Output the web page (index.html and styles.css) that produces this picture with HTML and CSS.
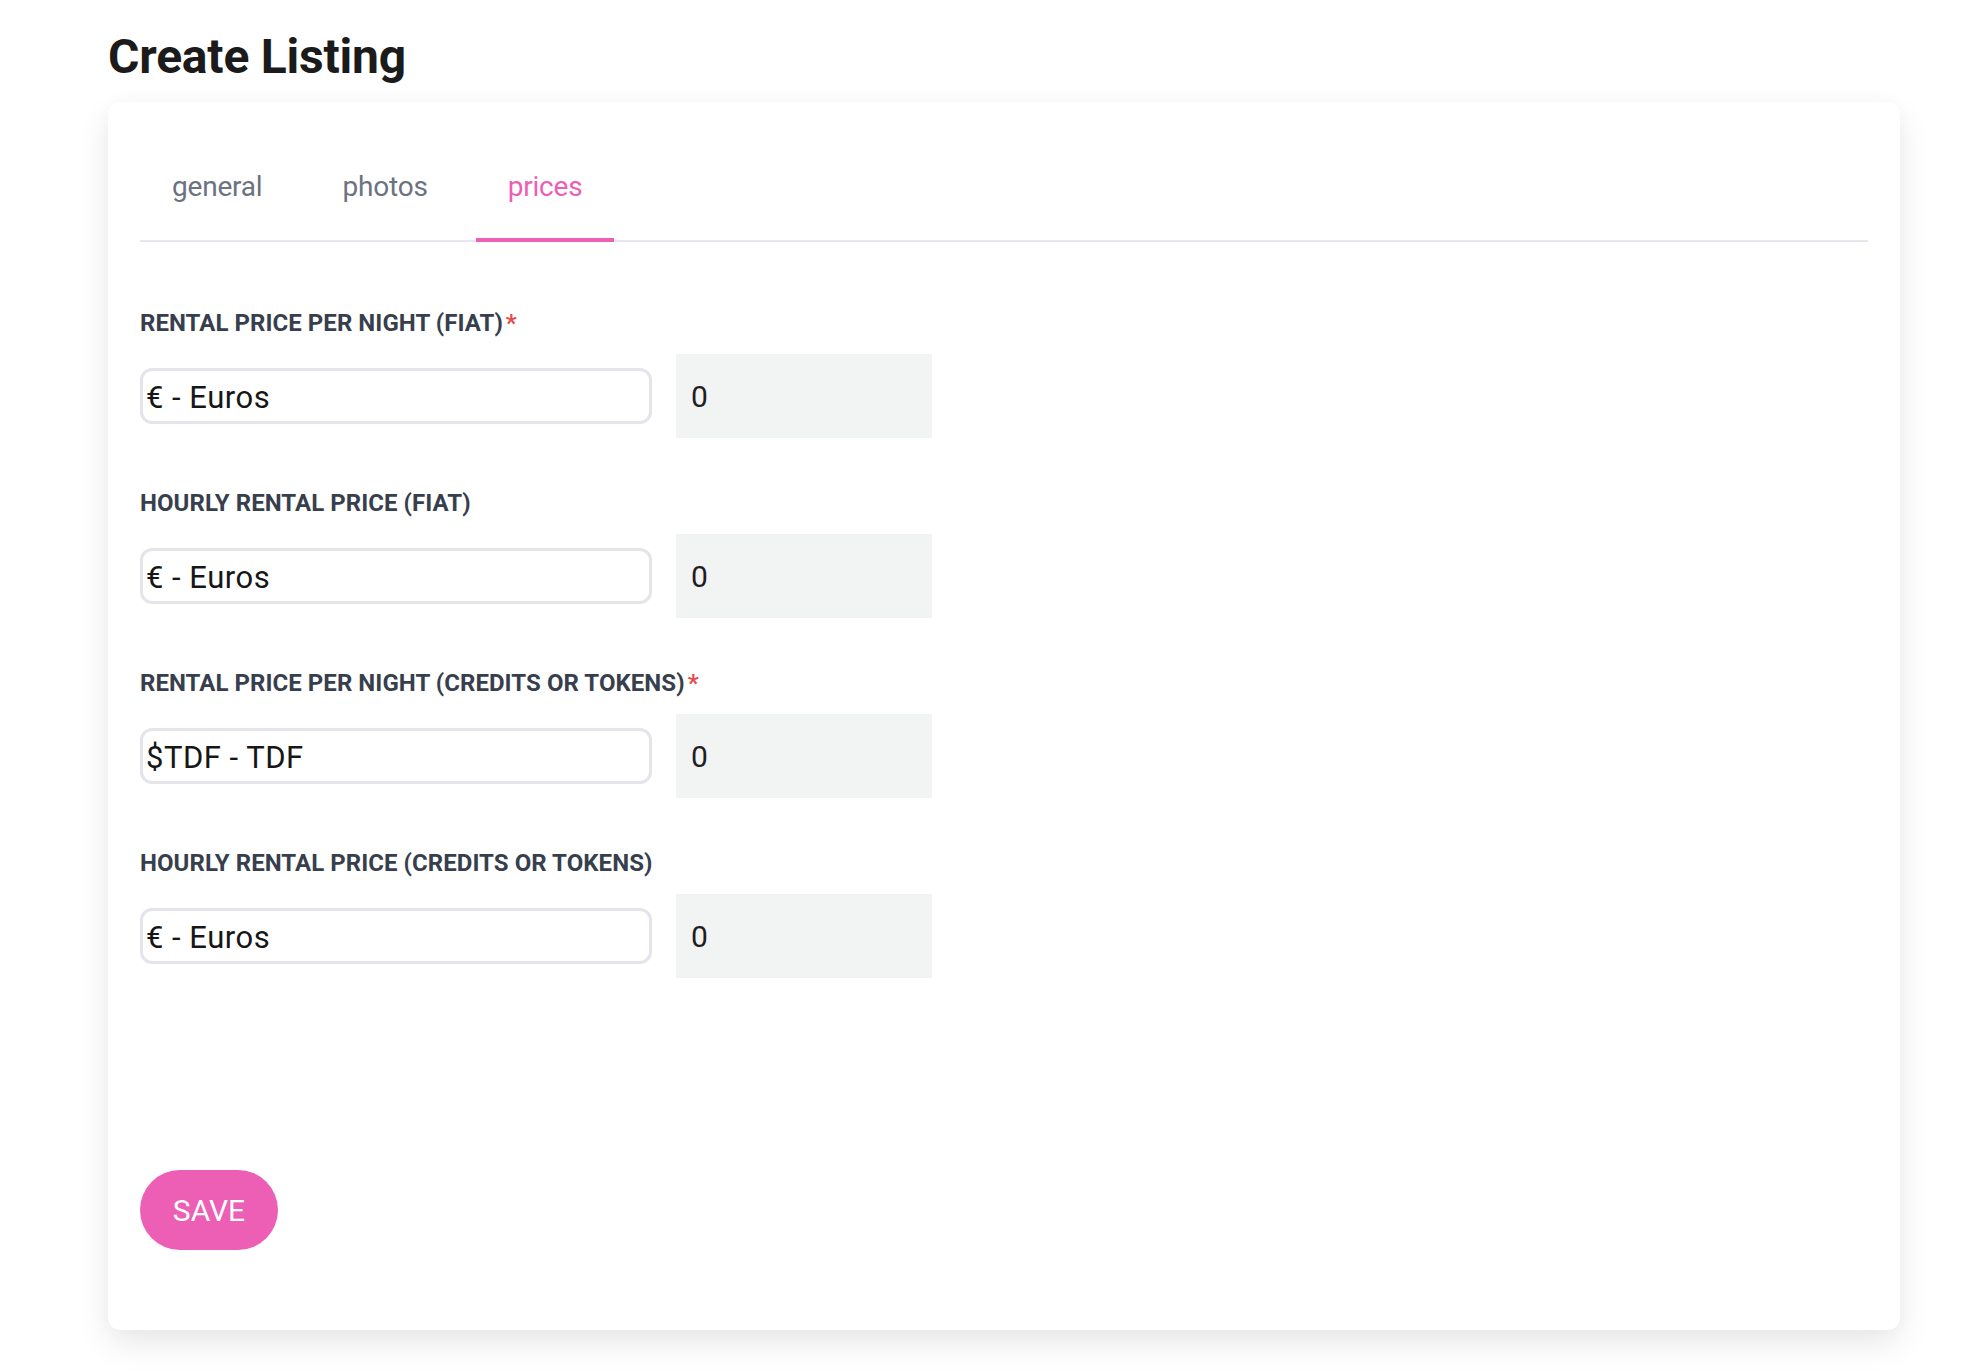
FILE: index.html
```html
<!DOCTYPE html>
<html lang="en">
<head>
<meta charset="utf-8">
<title>Create Listing</title>
<link rel="stylesheet" href="styles.css">
</head>
<body>
<main class="page">
  <h1 class="title">Create Listing</h1>
  <section class="card">
    <nav class="tabs">
      <a class="tab">general</a>
      <a class="tab">photos</a>
      <a class="tab active">prices</a>
    </nav>
    <form class="form">
      <div class="field">
        <label class="label">RENTAL PRICE PER NIGHT (FIAT)<span class="req">*</span></label>
        <div class="inputs">
          <select class="select"><option>€ - Euros</option></select>
          <input class="amount" type="text" value="0">
        </div>
      </div>
      <div class="field">
        <label class="label">HOURLY RENTAL PRICE (FIAT)</label>
        <div class="inputs">
          <select class="select"><option>€ - Euros</option></select>
          <input class="amount" type="text" value="0">
        </div>
      </div>
      <div class="field">
        <label class="label">RENTAL PRICE PER NIGHT (CREDITS OR TOKENS)<span class="req">*</span></label>
        <div class="inputs">
          <select class="select"><option>$TDF - TDF</option></select>
          <input class="amount" type="text" value="0">
        </div>
      </div>
      <div class="field">
        <label class="label">HOURLY RENTAL PRICE (CREDITS OR TOKENS)</label>
        <div class="inputs">
          <select class="select"><option>€ - Euros</option></select>
          <input class="amount" type="text" value="0">
        </div>
      </div>
      <button class="save" type="button">SAVE</button>
    </form>
  </section>
</main>
</body>
</html>
```

FILE: styles.css
```css
html, body {
  margin: 0;
  padding: 0;
  background: #ffffff;
}

body {
  font-family: Roboto, "Liberation Sans", Arial, sans-serif;
  color: #1a1a1a;
}

.page {
  padding: 33px 64px 40px 108px;
}

.title {
  margin: 0 0 21px 0;
  font-size: 48px;
  line-height: 48px;
  font-weight: 700;
  letter-spacing: -0.2px;
  color: #1b1b1b;
}

.card {
  background: #ffffff;
  border-radius: 12px;
  padding: 32px 32px 80px 32px;
  box-shadow: 0 14px 32px rgba(0, 0, 0, 0.09), 0 0 18px rgba(0, 0, 0, 0.025);
}

.tabs {
  display: flex;
  gap: 16px;
  border-bottom: 2px solid #e6e6ec;
}

.tab {
  display: block;
  padding: 33px 32px 31px 32px;
  font-size: 28px;
  line-height: 40px;
  letter-spacing: -0.2px;
  color: #6b7280;
  border-bottom: 4px solid transparent;
  margin-bottom: -2px;
  cursor: pointer;
}

.tab.active {
  color: #ec5fb5;
  border-bottom-color: #ec5fb5;
}

.form {
  display: flex;
  flex-direction: column;
  align-items: flex-start;
  padding-top: 66px;
}

.field {
  display: flex;
  flex-direction: column;
  gap: 16px;
  margin-bottom: 50px;
}

.label {
  font-size: 24px;
  line-height: 30px;
  font-weight: 700;
  letter-spacing: 0.05px;
  color: #373f4e;
}

.req {
  margin-left: 3px;
  color: #e24c4c;
}

.inputs {
  display: flex;
  align-items: center;
  gap: 24px;
}

.select {
  appearance: none;
  -webkit-appearance: none;
  box-sizing: border-box;
  width: 512px;
  height: 56px;
  border: 3px solid #e4e5ea;
  border-radius: 12px;
  background: #ffffff;
  padding: 2px 3px 0 3px;
  font-family: Roboto, "Liberation Sans", Arial, sans-serif;
  font-size: 31px;
  letter-spacing: 0.5px;
  color: #161616;
  outline: none;
}

.amount {
  box-sizing: border-box;
  width: 256px;
  height: 84px;
  border: none;
  background: #f2f3f3;
  padding: 0 15px;
  font-family: Roboto, "Liberation Sans", Arial, sans-serif;
  font-size: 30px;
  color: #1e1e1e;
  outline: none;
}

.save {
  margin-top: 142px;
  width: 138px;
  height: 80px;
  border: none;
  border-radius: 40px;
  background: #ec5fb5;
  color: #ffffff;
  font-family: Roboto, "Liberation Sans", Arial, sans-serif;
  font-size: 30px;
  font-weight: 400;
  cursor: pointer;
}
```
